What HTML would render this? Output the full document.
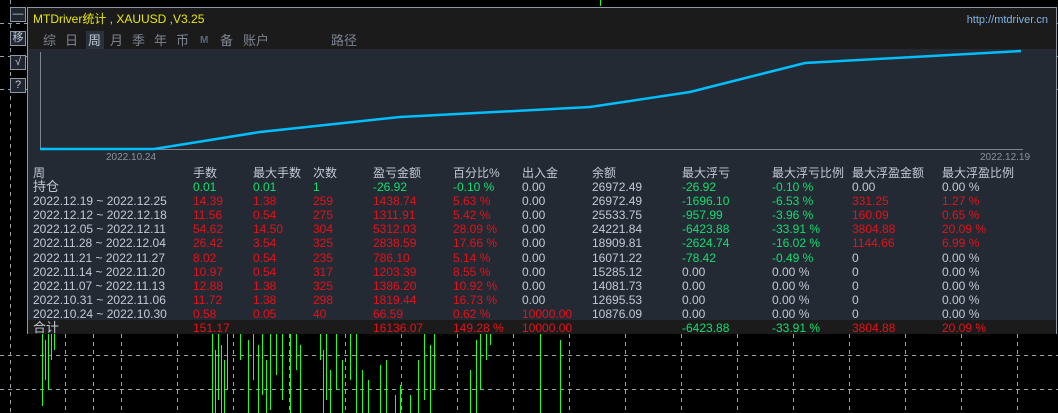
<!DOCTYPE html><html><head><meta charset="utf-8"><style>
*{margin:0;padding:0;box-sizing:border-box}
body{width:1058px;height:413px;background:#000;position:relative;overflow:hidden;font-family:"Liberation Sans","Noto Sans CJK SC",sans-serif;font-size:12px}
.p{position:absolute}
.btn{position:absolute;left:10px;width:16px;height:15px;border:1px solid #8c98a8;background:#1f2630;color:#c0c8d4;font-size:11px;text-align:center;line-height:13px}
#panel{position:absolute;left:27px;top:7px;width:1030px;height:327px;border:1px solid #8c98a8;background:#232a33}
.t{position:absolute;white-space:nowrap;line-height:14px}
.tab{position:absolute;top:25px;color:#7c8490;font-size:13px;line-height:16px}
.w{color:#c3cad6}.r{color:#e8101a}.g{color:#10e070}
</style></head><body>
<svg class="p" style="left:0;top:0" width="1058" height="413" shape-rendering="crispEdges">
<g stroke="#9aa0a8" stroke-dasharray="4,4" stroke-width="1">
<line x1="0" y1="23.5" x2="1058" y2="23.5"/><line x1="0" y1="56.5" x2="1058" y2="56.5"/><line x1="0" y1="89.5" x2="1058" y2="89.5"/>
<line x1="0" y1="355.5" x2="1058" y2="355.5"/><line x1="0" y1="389.5" x2="1058" y2="389.5"/>
<line x1="10.5" y1="0" x2="10.5" y2="413"/>
<path d="M65.5 334V413M93.5 334V413M121.5 334V413M177.5 334V413M233.5 334V413M289.5 334V413M345.5 334V413M401.5 334V413M457.5 334V413M513.5 334V413M569.5 334V413M625.5 334V413M681.5 334V413M737.5 334V413M793.5 334V413M849.5 334V413M905.5 334V413M961.5 334V413M1017.5 334V413"/>
</g>
<g stroke="#20ff20" stroke-width="1">
<path d="M42.5 334V406M45.5 340V380M48.5 334V390M51.5 334V360M54.5 334V350M212.5 334V413M215.5 350V413M218.5 334V400M221.5 345V413M224.5 360V413M227.5 334V390M240.5 334V360M248.5 340V413M253.5 334V380M258.5 345V413M262.5 334V395M266.5 360V413M270.5 334V410M276.5 334V375M282.5 334V400M290.5 334V413M296.5 334V370M300.5 345V413M320.5 334V360M323.5 350V413M326.5 334V400M330.5 370V413M336.5 334V390M342.5 360V413M350.5 334V380M356.5 334V413M362.5 370V413M368.5 380V413M380.5 365V413M386.5 360V413M395.5 395V413M400.5 385V413M410.5 395V413M418.5 360V413M424.5 334V400M430.5 345V413M434.5 334V390M470.5 370V413M476.5 340V413M480.5 334V390M486.5 334V360M490.5 334V345M540.5 334V413M560.5 340V413M600.5 0V6M1020.5 66V80M1024.5 62V78M1028.5 56V72M1040.5 48V62M1046.5 46V60M1052.5 40V58M1056.5 44V55"/>
</g>
</svg>
<div class="btn" style="top:7px">—</div>
<div class="btn" style="top:31px">移</div>
<div class="btn" style="top:55px">√</div>
<div class="btn" style="top:78px">?</div>
<div id="panel">
<div class="p" style="left:0;top:0;width:1028px;height:41px;background:#1b1b1b"></div>
<div class="t" style="left:5px;top:4px;color:#e8e800;font-size:12px">MTDriver统计 , XAUUSD ,V3.25</div>
<div class="t" style="right:8px;top:5px;color:#7fb4e8;font-size:11px">http://mtdriver.cn</div>
<div class="p" style="left:58px;top:23px;width:18px;height:18px;background:#2a323c"></div>
<span class="tab" style="left:15px">综</span>
<span class="tab" style="left:37px">日</span>
<span class="tab" style="left:60px;color:#c0c8d4">周</span>
<span class="tab" style="left:82px">月</span>
<span class="tab" style="left:104px">季</span>
<span class="tab" style="left:126px">年</span>
<span class="tab" style="left:148px">币</span>
<span class="tab" style="left:172px;font-size:10px;font-weight:bold;color:#5a6878">M</span>
<span class="tab" style="left:192px">备</span>
<span class="tab" style="left:215px">账户</span>
<span class="tab" style="left:303px">路径</span>
<svg class="p" style="left:0;top:41px" width="1028" height="120">
<path d="M12.5 3V100.5H995" stroke="#80868e" fill="none"/>
<polyline points="12,100 126,100 232,83 372,68 562,58 662,43 777,14 993,2" stroke="#00bfff" stroke-width="2.5" fill="none"/>
<text x="78" y="111" fill="#8a929c" font-size="10" font-family="Liberation Sans">2022.10.24</text>
<text x="952" y="111" fill="#8a929c" font-size="10" font-family="Liberation Sans">2022.12.19</text>
</svg>
<div class="p" style="left:0;top:312px;width:1028px;height:14px;background:#1b1b1b"></div>
<div id="tbl"></div>
</div>
<script>
var cols=[5,165,225,285,345,425,494,564,654,744,824,914];
var rows=[
["w周|w手数|w最大手数|w次数|w盈亏金额|w百分比%|w出入金|w余额|w最大浮亏|w最大浮亏比例|w最大浮盈金额|w最大浮盈比例"],
["w持仓|g0.01|g0.01|g1|g-26.92|g-0.10 %|w0.00|w26972.49|g-26.92|g-0.10 %|w0.00|w0.00 %"],
["w2022.12.19 ~ 2022.12.25|r14.39|r1.38|r259|r1438.74|r5.63 %|w0.00|w26972.49|g-1696.10|g-6.53 %|r331.25|r1.27 %"],
["w2022.12.12 ~ 2022.12.18|r11.56|r0.54|r275|r1311.91|r5.42 %|w0.00|w25533.75|g-957.99|g-3.96 %|r160.09|r0.65 %"],
["w2022.12.05 ~ 2022.12.11|r54.62|r14.50|r304|r5312.03|r28.09 %|w0.00|w24221.84|g-6423.88|g-33.91 %|r3804.88|r20.09 %"],
["w2022.11.28 ~ 2022.12.04|r26.42|r3.54|r325|r2838.59|r17.66 %|w0.00|w18909.81|g-2624.74|g-16.02 %|r1144.66|r6.99 %"],
["w2022.11.21 ~ 2022.11.27|r8.02|r0.54|r235|r786.10|r5.14 %|w0.00|w16071.22|g-78.42|g-0.49 %|w0|w0.00 %"],
["w2022.11.14 ~ 2022.11.20|r10.97|r0.54|r317|r1203.39|r8.55 %|w0.00|w15285.12|w0.00|w0.00 %|w0|w0.00 %"],
["w2022.11.07 ~ 2022.11.13|r12.88|r1.38|r325|r1386.20|r10.92 %|w0.00|w14081.73|w0.00|w0.00 %|w0|w0.00 %"],
["w2022.10.31 ~ 2022.11.06|r11.72|r1.38|r298|r1819.44|r16.73 %|w0.00|w12695.53|w0.00|w0.00 %|w0|w0.00 %"],
["w2022.10.24 ~ 2022.10.30|r0.58|r0.05|r40|r66.59|r0.62 %|r10000.00|w10876.09|w0.00|w0.00 %|w0|w0.00 %"],
["w合计|r151.17|w|w|r16136.07|r149.28 %|r10000.00|w|g-6423.88|g-33.91 %|r3804.88|r20.09 %"]];
var h="";
rows.forEach(function(r,i){var c=r[0].split("|");var top=i==0?158:(i==1?172:172+(i-1)*14.1);
c.forEach(function(v,j){var fs=(i<2||i==11)&&j==0?13:12;if(i==0)fs=12;h+='<div class="t '+v[0]+'" style="left:'+cols[j]+'px;top:'+top+'px;font-size:'+fs+'px">'+v.slice(1)+'</div>';});});
document.getElementById("tbl").innerHTML=h;
</script>
</body></html>
